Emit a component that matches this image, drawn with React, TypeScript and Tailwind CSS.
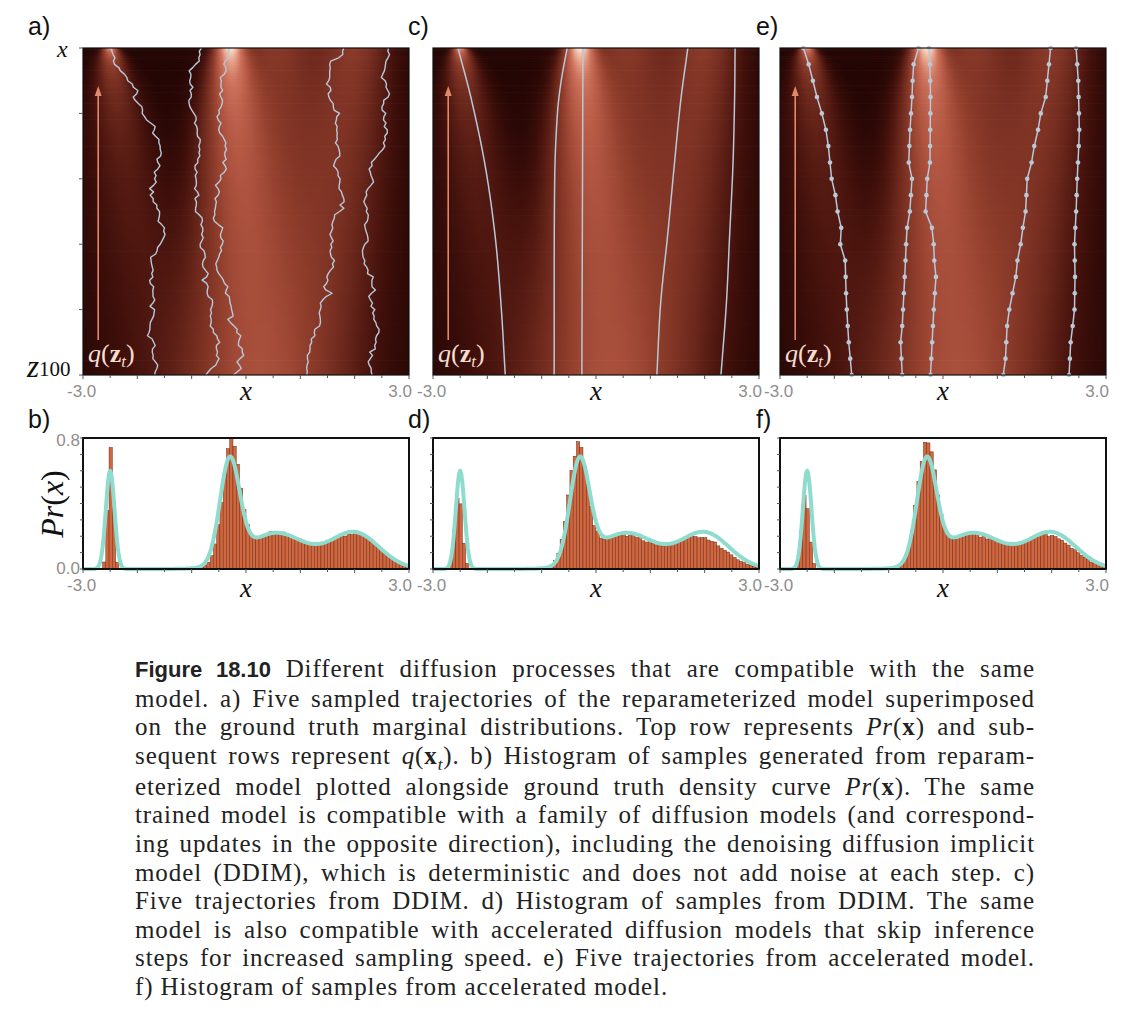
import React from "react";

// plot geometry shared by every panel
const PW = 326;
const PH = 327;
const TOP = 48;
const HTOP = 38;
const HH = 131;
const sx = (x: number) => ((x + 3) / 6) * PW;
const hy = (v: number) => HTOP + HH - (Math.min(v, 0.8) / 0.8) * HH;

type Comp = [number, number, number];
type Pt = [number, number];

const TRUTH: Comp[] = [
  [-2.5, 0.08, 0.6],
  [-0.3, 0.18, 0.62],
  [0.55, 0.55, 0.22],
  [2.0, 0.45, 0.22],
];

const gauss = (x: number, m: number, sd: number) =>
  Math.exp(-((x - m) ** 2) / (2 * sd * sd));

const mix = (x: number, comps: Comp[]) =>
  comps.reduce((d, [m, sd, amp]) => d + amp * gauss(x, m, sd), 0);

function marginal(x: number, s: number) {
  const na = 0.55 * s;
  const a = 1 - na;
  const ra = Math.sqrt(a);
  let d = 0;
  for (const [m, sd, amp] of TRUTH) {
    const sv = Math.sqrt(a * sd * sd + na);
    d += ((amp * sd) / sv) * gauss(x, ra * m, sv);
  }
  return d;
}

const CMAP: number[][] = [
  [0, 36, 6, 4],
  [0.06, 66, 16, 11],
  [0.15, 108, 40, 28],
  [0.25, 145, 62, 44],
  [0.35, 180, 88, 68],
  [0.45, 205, 114, 92],
  [0.55, 232, 165, 140],
  [0.7, 255, 242, 228],
];

function cmap(v: number) {
  if (v <= 0) return "rgb(36,6,4)";
  for (let i = 0; i < CMAP.length - 1; i++) {
    const a = CMAP[i];
    const b = CMAP[i + 1];
    if (v <= b[0]) {
      const t = (v - a[0]) / (b[0] - a[0]);
      const c = [1, 2, 3].map((j) => Math.round(a[j] + (b[j] - a[j]) * t));
      return `rgb(${c[0]},${c[1]},${c[2]})`;
    }
  }
  return "rgb(255,242,228)";
}

const ROWS = (() => {
  const N = 70;
  const out: { y0: number; y1: number; stops: { o: number; c: string }[] }[] = [];
  for (let k = 0; k < N; k++) {
    const y0 = PH * (k / N) ** 1.6;
    const y1 = PH * ((k + 1) / N) ** 1.6;
    const s = (y0 + y1) / 2 / PH;
    const step = s < 0.12 ? 0.05 : 0.1;
    const stops = [];
    for (let x = -3; x <= 3.0001; x += step) {
      stops.push({ o: (x + 3) / 6, c: cmap(marginal(x, s)) });
    }
    out.push({ y0, y1, stops });
  }
  return out;
})();

function rng(seed: number) {
  let t = seed >>> 0;
  return () => {
    t += 0x6d2b79f5;
    let r = Math.imul(t ^ (t >>> 15), 1 | t);
    r ^= r + Math.imul(r ^ (r >>> 7), 61 | r);
    return ((r ^ (r >>> 14)) >>> 0) / 4294967296;
  };
}

function normal(r: () => number) {
  const u = Math.max(r(), 1e-9);
  return Math.sqrt(-2 * Math.log(u)) * Math.cos(2 * Math.PI * r());
}

function interp(kp: Pt[], s: number) {
  for (let i = 0; i < kp.length - 1; i++) {
    const [s0, x0] = kp[i];
    const [s1, x1] = kp[i + 1];
    if (s <= s1) return x0 + ((x1 - x0) * (s - s0)) / (s1 - s0);
  }
  return kp[kp.length - 1][1];
}

const toPath = (pts: Pt[]) =>
  pts.map(([s, x], i) => `${i ? "L" : "M"}${sx(x).toFixed(2)},${(s * PH).toFixed(2)}`).join("");

// noisy walk pinned to the keypoints
function jagged(kp: Pt[], seed: number, n = 100, sigma = 0.038): Pt[] {
  const r = rng(seed);
  const walk = [0];
  for (let i = 1; i <= n; i++) walk.push(walk[i - 1] + normal(r) * sigma);
  const idx = kp.map(([s]) => Math.round(s * n));
  const pts: Pt[] = [];
  for (let i = 0; i <= n; i++) {
    let j = 0;
    while (j < idx.length - 2 && i > idx[j + 1]) j++;
    const a = idx[j];
    const b = idx[j + 1];
    const br = walk[i] - walk[a] - ((i - a) / Math.max(b - a, 1)) * (walk[b] - walk[a]);
    pts.push([i / n, interp(kp, i / n) + br]);
  }
  return pts;
}

function smooth(kp: Pt[], n = 80): Pt[] {
  const pts: Pt[] = [];
  for (let i = 0; i <= n; i++) {
    const s = i / n;
    let j = 0;
    while (j < kp.length - 2 && s > kp[j + 1][0]) j++;
    const p0 = kp[Math.max(j - 1, 0)];
    const p1 = kp[j];
    const p2 = kp[j + 1];
    const p3 = kp[Math.min(j + 2, kp.length - 1)];
    const d = p2[0] - p1[0];
    const t = (s - p1[0]) / d;
    const m1 = ((p2[1] - p0[1]) / (p2[0] - p0[0])) * d;
    const m2 = ((p3[1] - p1[1]) / (p3[0] - p1[0])) * d;
    const x =
      (2 * t ** 3 - 3 * t ** 2 + 1) * p1[1] +
      (t ** 3 - 2 * t ** 2 + t) * m1 +
      (-2 * t ** 3 + 3 * t ** 2) * p2[1] +
      (t ** 3 - t ** 2) * m2;
    pts.push([s, x]);
  }
  return pts;
}

const A_KEYS: Pt[][] = [
  [[0, -2.48], [0.13, -1.99], [0.16, -2.04], [0.32, -1.56], [0.46, -1.71], [0.57, -1.49], [0.77, -1.68], [1, -1.68]],
  [[0, -0.82], [0.13, -1.03], [0.31, -0.85], [0.46, -0.94], [0.67, -0.79], [0.87, -0.6], [1, -0.74]],
  [[0, -0.31], [0.13, -0.43], [0.31, -0.36], [0.46, -0.57], [0.67, -0.54], [0.77, -0.3], [0.87, -0.17], [1, -0.23]],
  [[0, 1.8], [0.06, 1.55], [0.21, 1.67], [0.36, 1.61], [0.46, 1.8], [0.67, 1.61], [0.82, 1.36], [0.92, 1.18], [1, 1.12]],
  [[0, 2.62], [0.06, 2.56], [0.26, 2.6], [0.36, 2.32], [0.57, 2.23], [0.77, 2.29], [0.92, 2.38], [1, 2.32]],
];

const C_KEYS: Pt[][] = [
  [[0, -2.54], [0.16, -2.29], [0.36, -2.04], [0.57, -1.86], [0.78, -1.75], [1, -1.67]],
  [[0, -0.53], [0.1, -0.64], [0.2, -0.71], [0.4, -0.76], [1, -0.77]],
  [[0, -0.24], [1, -0.26]],
  [[0, 1.69], [0.16, 1.56], [0.36, 1.44], [0.57, 1.32], [0.78, 1.19], [1, 1.12]],
  [[0, 2.56], [0.16, 2.55], [0.36, 2.52], [0.57, 2.46], [0.78, 2.4], [1, 2.3]],
];

const E_KEYS: Pt[][] = [
  [[0, -2.57], [0.056, -2.46], [0.15, -2.32], [0.2, -2.23], [0.26, -2.14], [0.3, -2.11], [0.4, -2.05], [0.45, -1.98], [0.5, -1.94], [0.56, -1.86], [0.6, -1.89], [0.65, -1.8], [0.77, -1.78], [0.89, -1.74], [1, -1.68]],
  [[0, -0.45], [0.056, -0.55], [0.15, -0.57], [0.26, -0.61], [0.35, -0.63], [0.4, -0.57], [0.5, -0.61], [0.56, -0.67], [0.65, -0.69], [0.75, -0.72], [0.85, -0.75], [0.9, -0.78], [1, -0.75]],
  [[0, -0.26], [0.056, -0.24], [0.15, -0.23], [0.35, -0.24], [0.4, -0.29], [0.5, -0.32], [0.56, -0.18], [0.65, -0.16], [0.7, -0.13], [0.8, -0.17], [0.9, -0.2], [1, -0.23]],
  [[0, 1.98], [0.1, 1.92], [0.15, 1.89], [0.2, 1.8], [0.26, 1.74], [0.3, 1.68], [0.35, 1.63], [0.4, 1.55], [0.5, 1.52], [0.56, 1.46], [0.6, 1.43], [0.65, 1.37], [0.7, 1.34], [0.75, 1.28], [0.8, 1.22], [0.85, 1.18], [0.95, 1.15], [1, 1.11]],
  [[0, 2.45], [0.1, 2.49], [0.26, 2.51], [0.4, 2.47], [0.5, 2.45], [0.6, 2.42], [0.7, 2.43], [0.8, 2.42], [0.86, 2.38], [0.9, 2.35], [1, 2.32]],
];

const A_PATHS = A_KEYS.map((k, i) => toPath(jagged(k, 11 + i * 7)));
const C_PATHS = C_KEYS.map((k) => toPath(smooth(k)));
const E_PTS = E_KEYS.map((k) => Array.from({ length: 21 }, (_, i) => [i / 20, interp(k, i / 20)] as Pt));

const HIST: Record<string, Comp[]> = {
  b: [[-2.49, 0.05, 0.76], [-0.27, 0.16, 0.72], [0.55, 0.55, 0.22], [2.0, 0.45, 0.21]],
  d: [[-2.53, 0.07, 0.45], [-0.33, 0.17, 0.7], [0.5, 0.55, 0.21], [1.92, 0.45, 0.19]],
  f: [[-2.53, 0.07, 0.45], [-0.3, 0.17, 0.72], [0.52, 0.55, 0.21], [1.95, 0.45, 0.2]],
};

function bars(comps: Comp[], seed: number) {
  const r = rng(seed);
  return Array.from({ length: 100 }, (_, i) => {
    const x = -3 + (i + 0.5) * 0.06;
    return mix(x, comps) * (1 + (r() - 0.5) * 0.1);
  });
}

const CURVE = Array.from({ length: 301 }, (_, i) => {
  const x = -3 + i * 0.02;
  return `${i ? "L" : "M"}${sx(x).toFixed(2)},${hy(mix(x, TRUTH)).toFixed(2)}`;
}).join("");

const SERIF = "Liberation Serif, serif";
const SANS = "Liberation Sans, sans-serif";

const GradientDefs = () => (
  <svg width={0} height={0} className="block">
    <defs>
      {ROWS.map((r, k) => (
        <linearGradient key={k} id={`hm-${k}`} x1="0" x2="1" y1="0" y2="0">
          {r.stops.map((st, i) => (
            <stop key={i} offset={st.o} stopColor={st.c} />
          ))}
        </linearGradient>
      ))}
    </defs>
  </svg>
);

const BottomTicks = ({ y }: { y: number }) => (
  <g stroke="#555" strokeWidth={1}>
    {Array.from({ length: 13 }, (_, i) => (
      <line key={i} x1={(i * PW) / 12} x2={(i * PW) / 12} y1={y} y2={y + (i % 2 ? 3 : 4)} />
    ))}
  </g>
);

type PanelProps = { w: number; ox: number; label: string; lx: number; kind: "a" | "c" | "e"; axis?: boolean };

function Heatmap({ w, ox, label, lx, kind, axis }: PanelProps) {
  return (
    <svg width={w} height={400} className="block shrink-0 overflow-visible">
      <text x={lx} y={35} fontFamily={SANS} fontSize={25} fill="#111">
        {label}
      </text>
      {axis && (
        <g fontFamily={SERIF} fill="#111">
          <text x={ox - 26} y={57} fontSize={24} fontStyle="italic">
            x
          </text>
          <text x={ox - 56} y={377} fontSize={31} fontStyle="italic">
            z<tspan fontStyle="normal" fontSize={21} dy={-1}>100</tspan>
          </text>
        </g>
      )}
      <g transform={`translate(${ox},${TOP})`}>
        {ROWS.map((r, k) => (
          <rect
            key={k}
            x={0}
            y={r.y0}
            width={PW}
            height={r.y1 - r.y0 + (k < ROWS.length - 1 ? 0.7 : 0)}
            fill={`url(#hm-${k})`}
          />
        ))}
        <line x1={sx(-2.72)} x2={sx(-2.72)} y1={292} y2={46} stroke="#e2896c" strokeWidth={1.6} />
        <path d={`M${sx(-2.72) - 3.5},${48} L${sx(-2.72)},${38} L${sx(-2.72) + 3.5},${48} Z`} fill="#e2896c" />
        <g fill="none" stroke="#b7c8d8" strokeWidth={kind === "a" ? 1.4 : 1.5} strokeLinejoin="round">
          {kind === "a" && A_PATHS.map((d, i) => <path key={i} d={d} />)}
          {kind === "c" && C_PATHS.map((d, i) => <path key={i} d={d} />)}
          {kind === "e" && E_PTS.map((p, i) => <path key={i} d={toPath(p)} />)}
        </g>
        {kind === "e" && (
          <g fill="#b9c9d8">
            {E_PTS.flat().map(([s, x], i) => (
              <circle key={i} cx={sx(x)} cy={s * PH} r={2.3} />
            ))}
          </g>
        )}
        <text x={5} y={314} fontFamily={SERIF} fontSize={26} fill="#f6dccf">
          <tspan fontStyle="italic">q</tspan>(<tspan fontWeight="bold">z</tspan>
          <tspan fontStyle="italic" fontSize={17} dy={5}>t</tspan>
          <tspan dy={-5}>)</tspan>
        </text>
        <rect x={0} y={0} width={PW} height={PH} fill="none" stroke="#111" strokeWidth={1.2} />
        {axis && (
          <g stroke="#555" strokeWidth={1}>
            {Array.from({ length: 6 }, (_, i) => (
              <line key={i} x1={-4} x2={0} y1={(i * PH) / 5} y2={(i * PH) / 5} />
            ))}
          </g>
        )}
        <BottomTicks y={PH} />
      </g>
      <g fontFamily={SANS} fontSize={17} fill="#8e8e8e">
        <text x={ox - 16} y={397}>-3.0</text>
        <text x={ox + PW + 3} y={397} textAnchor="end">3.0</text>
      </g>
      <text x={ox + PW / 2} y={400} fontFamily={SERIF} fontSize={27} fontStyle="italic" textAnchor="middle" fill="#111">
        x
      </text>
    </svg>
  );
}

type HistProps = { w: number; ox: number; label: string; lx: number; kind: "b" | "d" | "f"; seed: number; axis?: boolean };

function Histogram({ w, ox, label, lx, kind, seed, axis }: HistProps) {
  const vals = bars(HIST[kind], seed);
  const bw = PW / 100;
  return (
    <svg width={w} height={210} className="block shrink-0 overflow-visible">
      <text x={lx} y={28} fontFamily={SANS} fontSize={25} fill="#111">
        {label}
      </text>
      {axis && (
        <>
          <g fontFamily={SANS} fontSize={17} fill="#8e8e8e" textAnchor="end">
            <text x={ox - 3} y={46}>0.8</text>
            <text x={ox - 3} y={174}>0.0</text>
          </g>
          <text
            transform={`translate(${ox - 20},104) rotate(-90)`}
            fontFamily={SERIF}
            fontSize={32}
            fontStyle="italic"
            textAnchor="middle"
            fill="#111"
          >
            Pr<tspan fontStyle="normal">(</tspan>x<tspan fontStyle="normal">)</tspan>
          </text>
        </>
      )}
      <g transform={`translate(${ox},0)`}>
        <g fill="#d0673f" stroke="#6e2c1a" strokeWidth={0.5}>
          {vals.map((v, i) =>
            v > 0.004 ? (
              <rect key={i} x={i * bw} y={hy(v)} width={bw} height={HTOP + HH - hy(v)} />
            ) : null
          )}
        </g>
        <path d={CURVE} fill="none" stroke="#8fdcce" strokeWidth={4} strokeLinejoin="round" />
        <rect x={0} y={HTOP} width={PW} height={HH} fill="none" stroke="#111" strokeWidth={2} />
        <g stroke="#555" strokeWidth={1}>
          {Array.from({ length: 9 }, (_, i) => (
            <line key={i} x1={-3} x2={0} y1={HTOP + (i * HH) / 8} y2={HTOP + (i * HH) / 8} />
          ))}
        </g>
        <g transform={`translate(0,${HTOP + HH - PH})`}>
          <BottomTicks y={PH} />
        </g>
      </g>
      <g fontFamily={SANS} fontSize={17} fill="#8e8e8e">
        <text x={ox - 16} y={191}>-3.0</text>
        <text x={ox + PW + 3} y={191} textAnchor="end">3.0</text>
      </g>
      <text x={ox + PW / 2} y={197} fontFamily={SERIF} fontSize={27} fontStyle="italic" textAnchor="middle" fill="#111">
        x
      </text>
    </svg>
  );
}

const X = () => <span className="font-bold not-italic">x</span>;
const PrX = () => (
  <>
    <span className="italic">Pr</span>(<X />)
  </>
);
const QXt = () => (
  <>
    <span className="italic">q</span>(<X />
    <span className="align-sub text-[17px] italic leading-none">t</span>)
  </>
);

const LINES: React.ReactNode[] = [
  <>
    <span className="font-['Liberation_Sans'] text-[22px] font-bold tracking-normal">Figure 18.10</span> Different diffusion processes that are compatible with the same
  </>,
  <>model. a) Five sampled trajectories of the reparameterized model superimposed</>,
  <>
    on the ground truth marginal distributions. Top row represents <PrX /> and sub-
  </>,
  <>
    sequent rows represent <QXt />. b) Histogram of samples generated from reparam-
  </>,
  <>
    eterized model plotted alongside ground truth density curve <PrX />. The same
  </>,
  <>trained model is compatible with a family of diffusion models (and correspond-</>,
  <>ing updates in the opposite direction), including the denoising diffusion implicit</>,
  <>model (DDIM), which is deterministic and does not add noise at each step. c)</>,
  <>Five trajectories from DDIM. d) Histogram of samples from DDIM. The same</>,
  <>model is also compatible with accelerated diffusion models that skip inference</>,
  <>steps for increased sampling speed. e) Five trajectories from accelerated model.</>,
  <>f) Histogram of samples from accelerated model.</>,
];

export default function App() {
  return (
    <div className="w-[1142px] min-h-[1018px] bg-white text-[#1c1c1c]">
      <GradientDefs />
      <div className="flex h-[400px] pl-[20px]">
        <Heatmap w={388} ox={63} label="a)" lx={8} kind="a" axis />
        <Heatmap w={348} ox={25} label="c)" lx={0} kind="c" />
        <Heatmap w={360} ox={24} label="e)" lx={0} kind="e" />
      </div>
      <div className="flex h-[210px] pl-[20px]">
        <Histogram w={388} ox={63} label="b)" lx={8} kind="b" seed={3} axis />
        <Histogram w={348} ox={25} label="d)" lx={0} kind="d" seed={5} />
        <Histogram w={360} ox={24} label="f)" lx={0} kind="f" seed={9} />
      </div>
      <div className="ml-[135px] mt-[45px] w-[900px] font-['Liberation_Serif'] text-[25px] leading-[28.6px] tracking-[0.9px] text-[#222]">
        {LINES.map((l, i) => (
          <p
            key={i}
            className={
              i < LINES.length - 1 ? "text-justify [text-align-last:justify]" : "text-left"
            }
          >
            {l}
          </p>
        ))}
      </div>
    </div>
  );
}
